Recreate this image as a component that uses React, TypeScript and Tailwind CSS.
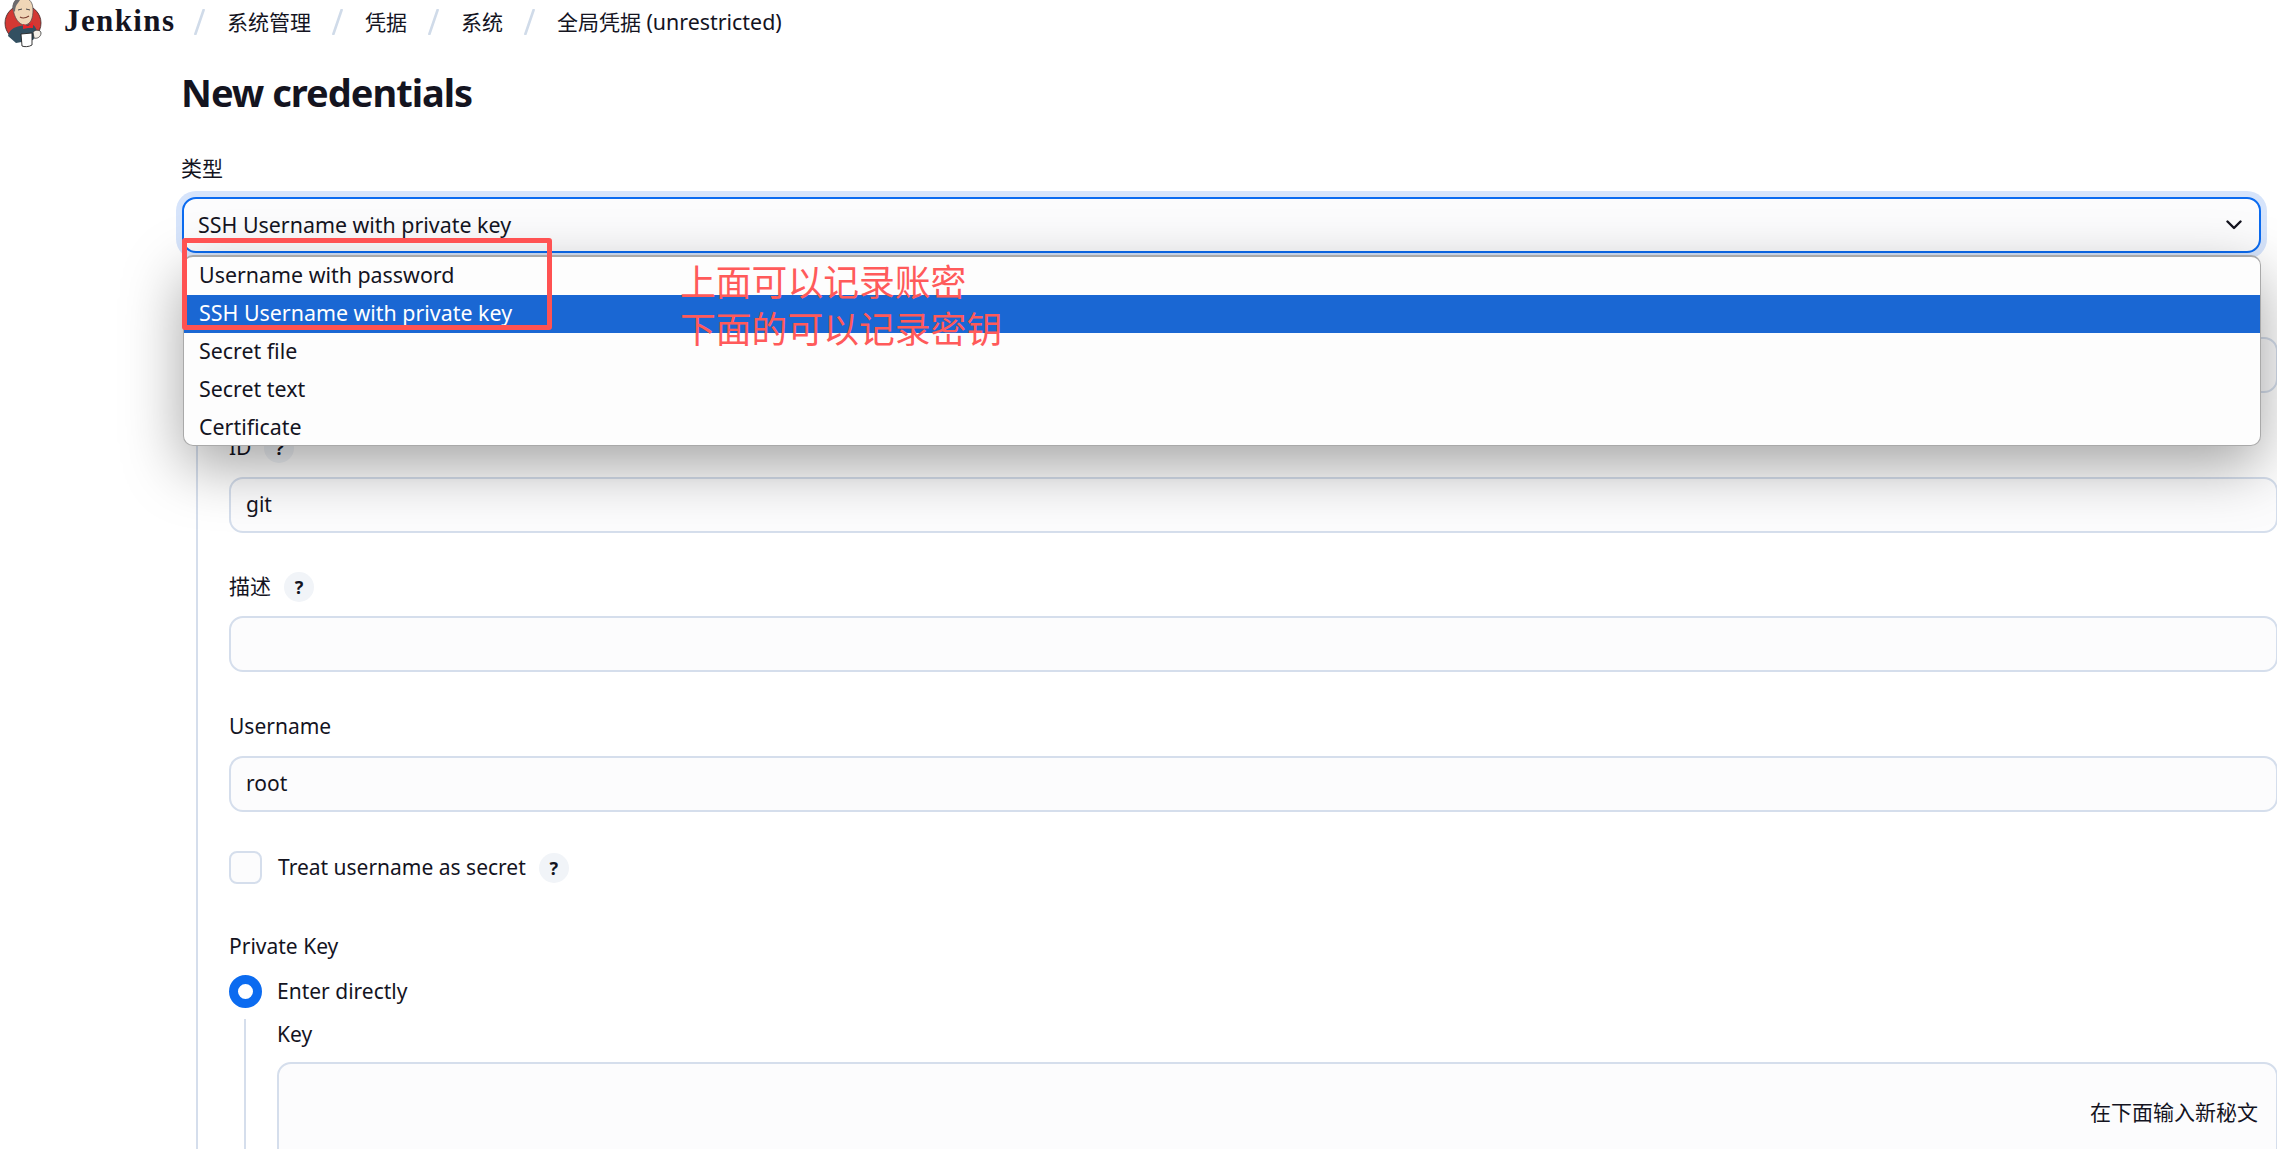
import React from "react";

function Help() {
  return (
    <span className="flex h-[30px] w-[30px] shrink-0 items-center justify-center rounded-full bg-[#f1f4f8] text-[18px] font-bold leading-none text-[#14141f]">
      ?
    </span>
  );
}

function Label({ text, help }: { text?: string; help?: boolean }) {
  return (
    <div className="mb-[14px] flex h-[30px] items-center gap-[13px] text-[21px]">
      {text && <span>{text}</span>}
      {help && <Help />}
    </div>
  );
}

function Field({ label, help, value, chevron }: { label?: string; help?: boolean; value?: string; chevron?: boolean }) {
  return (
    <div className="mb-[39.5px]">
      <Label text={label} help={help} />
      <div className="flex h-[56px] items-center justify-between rounded-[14px] border-2 border-[#d5deec] bg-[#fcfcfd] pl-[15px] pr-[17px] text-[21px]">
        <span>{value}</span>
        {chevron && <Chevron />}
      </div>
    </div>
  );
}

function Chevron() {
  return (
    <svg width="16" height="10" viewBox="0 0 16 10" fill="none" className="shrink-0">
      <path d="M1.5 1.5 L8 8 L14.5 1.5" stroke="#14141f" strokeWidth="2.4" strokeLinecap="round" strokeLinejoin="round" />
    </svg>
  );
}

function Slash() {
  return (
    <svg width="11" height="26" viewBox="0 0 11 26" className="mt-[9px] shrink-0">
      <line x1="9.6" y1="1" x2="1.4" y2="25" stroke="#d0dbe9" strokeWidth="2.6" strokeLinecap="round" />
    </svg>
  );
}

function Logo() {
  return (
    <svg width="42" height="48" viewBox="0 0 42 48" className="ml-[3px] shrink-0">
      <circle cx="20" cy="23" r="18" fill="#d33833" stroke="#3a2a2a" strokeWidth="0.8" />
      <path d="M5 36 C6 30 11 27 17 26 L28 24 C33 26 34 30 34 34 L30 40 L13 43 Z" fill="#335061" />
      <path d="M10 8 C10 2 14 -2 20 -2 C27 -2 30 3 30 10 C30 18 28 24 22 25 C16 25 11 18 10 8 Z" fill="#f0d6b7" stroke="#49484a" strokeWidth="0.7" />
      <path d="M10 10 C8 3 13 -3 19 -3 L15 3 C13 5 12 8 12 12 Z" fill="#6d6b6d" />
      <path d="M15 10 L19 9 M23 9 L27 10" stroke="#49484a" strokeWidth="1" />
      <path d="M17 17 C20 19 23 18 26 16" stroke="#7a3b2e" strokeWidth="1.1" fill="none" />
      <path d="M20 24 L25 26 L30 22 L30 28 L25 28 L20 29 Z" fill="#e6252a" />
      <path d="M30 32 C33 29 38 30 38 33 C38 37 34 39 31 38 Z" fill="#f4f0e8" stroke="#333" strokeWidth="0.8" />
      <path d="M18 34 L29 33 L29 45 C26 47 21 47 19 46 Z" fill="#ffffff" stroke="#222" strokeWidth="0.9" />
    </svg>
  );
}

const options = ["Username with password", "SSH Username with private key", "Secret file", "Secret text", "Certificate"];

export default function App() {
  return (
    <div className="relative h-[1149px] w-[2277px] overflow-hidden bg-white font-['Noto_Sans','Noto_Sans_CJK_SC',sans-serif] text-[#14141f]">
      <header className="flex h-[47px] items-start">
        <Logo />
        <span className="ml-[19px] h-[44px] font-['Liberation_Serif',serif] text-[31px] font-bold leading-[42px] tracking-[1.4px]">Jenkins</span>
        <nav className="ml-[19px] flex items-start gap-[21.5px] text-[21px] leading-[44px]">
          <Slash />
          <span>系统管理</span>
          <Slash />
          <span>凭据</span>
          <Slash />
          <span>系统</span>
          <Slash />
          <span>
            全局凭据 <span className="text-[21.4px]">(unrestricted)</span>
          </span>
        </nav>
      </header>

      <main className="pl-[181px]">
        <h1 className="mt-[20px] h-[50px] text-[38px] font-bold leading-[50px] tracking-[-1px]">New credentials</h1>
        <div className="mb-[13px] mt-[37px] flex h-[30px] items-center text-[21px]">类型</div>

        <div className="relative z-10 ml-px w-[2079px]">
          <div className="flex h-[56px] items-center justify-between rounded-[14px] border-2 border-[#0b6bf0] bg-[#fcfcfd] pl-[14px] pr-[17px] text-[21.4px] shadow-[0_0_0_6px_#d6e4fb]">
            <span className="pt-px">SSH Username with private key</span>
            <Chevron />
          </div>

          <ul className="absolute left-px right-0 top-[58px] h-[191px] overflow-hidden rounded-[10px] border border-t-2 border-[#a9a9a9] bg-[#fdfdfd] text-[21.4px] shadow-[0_20px_60px_rgba(0,0,0,0.36)]">
            {options.map((o, i) => (
              <li
                key={o}
                className={
                  i === 1
                    ? "flex h-[38px] items-center bg-[#1a67d3] pb-[2px] pl-[15px] text-white"
                    : "flex h-[38px] items-center pb-[2px] pl-[15px]"
                }
              >
                {o}
              </li>
            ))}
          </ul>

          <div className="absolute left-0 top-[41px] h-[92px] w-[370px] rounded-[3px] border-[5px] border-[#ff5252]" />
          <div className="absolute left-[498px] top-[62px] text-[35.8px] font-normal leading-[47px] text-[#ff5a5a]">
            <div>上面可以记录账密</div>
            <div>下面的可以记录密钥</div>
          </div>
        </div>

        <section className="ml-[15px] mt-[40px] w-[2082px] border-l-2 border-[#d5deec] pl-[31px]">
          <Field chevron />
          <Field label="ID" help value="git" />
          <Field label="描述" help />
          <Field label="Username" value="root" />

          <div className="flex h-[33px] items-center text-[21px]">
            <span className="h-[33px] w-[33px] rounded-[8px] border-2 border-[#d5deec] bg-[#fcfcfd]" />
            <span className="ml-[16px]">Treat username as secret</span>
            <span className="ml-[13px]">
              <Help />
            </span>
          </div>

          <div className="mt-[48px]">
            <div className="mb-[13px] flex h-[30px] items-center text-[21px]">Private Key</div>
            <div className="flex h-[33px] items-center text-[21px]">
              <span className="h-[33px] w-[33px] rounded-full border-[9.5px] border-[#0b6bf0] bg-white" />
              <span className="ml-[15px]">Enter directly</span>
            </div>
            <div className="ml-[15px] mt-[11px] border-l-2 border-[#d5deec] pl-[31px]">
              <div className="mb-[13px] mt-px flex h-[30px] items-center pt-px text-[21px]">Key</div>
              <div className="relative h-[200px] rounded-[14px] border-2 border-[#d5deec] bg-[#fcfcfd]">
                <span className="absolute right-[18px] top-[33px] text-[21px] leading-[30px]">在下面输入新秘文</span>
              </div>
            </div>
          </div>
        </section>
      </main>
    </div>
  );
}
